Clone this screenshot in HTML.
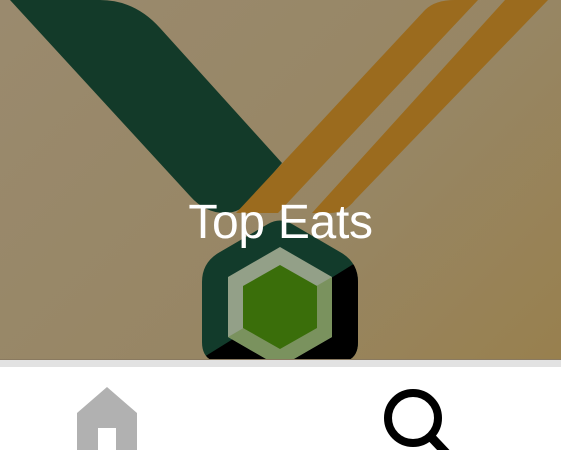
<!DOCTYPE html>
<html><head><meta charset="utf-8"><style>
html,body{margin:0;padding:0;width:561px;height:450px;overflow:hidden;background:#fff}
.hero{position:absolute;left:0;top:0;width:561px;height:360px;overflow:hidden;background:linear-gradient(135deg,#9a8a6e 0%,#978664 60%,#98804e 100%)}
.sep{position:absolute;left:0;top:359px;width:561px;height:7px;background:#e2e2e2;border-top:1px solid #8a7a60}
.title{position:absolute;left:0;width:561px;top:195px;text-align:center;color:#fff;font-family:"Liberation Sans",sans-serif;font-size:48px;font-weight:normal;letter-spacing:-0.3px}
</style></head><body>
<div class="hero">
<svg width="561" height="360" viewBox="0 0 561 360" style="position:absolute;left:0;top:0">
 <path d="M10,0 L100,0 Q135,0 160,28 L282,163 L250,200 Q240,213 225,213 Q205,213 190,196 Z" fill="#133a29"/>
 <path d="M236,213 L425,10 Q435,0 455,0 L478,0 L278,213 Z" fill="#9b6b1e"/>
 <path d="M312,213 L505,0 L548,0 L355,200 Q345,213 330,213 Z" fill="#9b6b1e"/>
 <clipPath id="c"><path d="M202,282 Q202,262 220,252 L268,224 Q280,217 292,224 L340,252 Q358,262 358,282 L358,342 Q358,362 338,362 L222,362 Q202,362 202,342 Z"/></clipPath>
 <g clip-path="url(#c)">
  <rect x="195" y="210" width="170" height="160" fill="#123b2b"/>
  <path d="M360,260 L360,380 L180,380 L180,372 Z" fill="#000"/>
 </g>
 <polygon points="280,247 332,277 332,337 280,367 228,337 228,277" fill="#93a088"/>
 <polygon points="332,277 332,337 280,367 228,337 280,307" fill="#78905a" opacity="0.9"/>
 <polygon points="280,265 317,286 317,328 280,349 243,328 243,286" fill="#3a6e0a"/>
</svg>
<div class="title">Top Eats</div>
</div>
<div class="sep"></div>
<svg width="561" height="84" viewBox="0 366 561 84" style="position:absolute;left:0;top:366px">
 <path d="M77,450 L77,413 L107,387 L137,413 L137,450 Z" fill="#b1b1b1"/>
 <rect x="98" y="428" width="18" height="30" fill="#fff"/>
 <circle cx="413" cy="418" r="25" fill="none" stroke="#000" stroke-width="8"/>
 <line x1="431" y1="437" x2="448" y2="455" stroke="#000" stroke-width="9"/>
</svg>
</body></html>
